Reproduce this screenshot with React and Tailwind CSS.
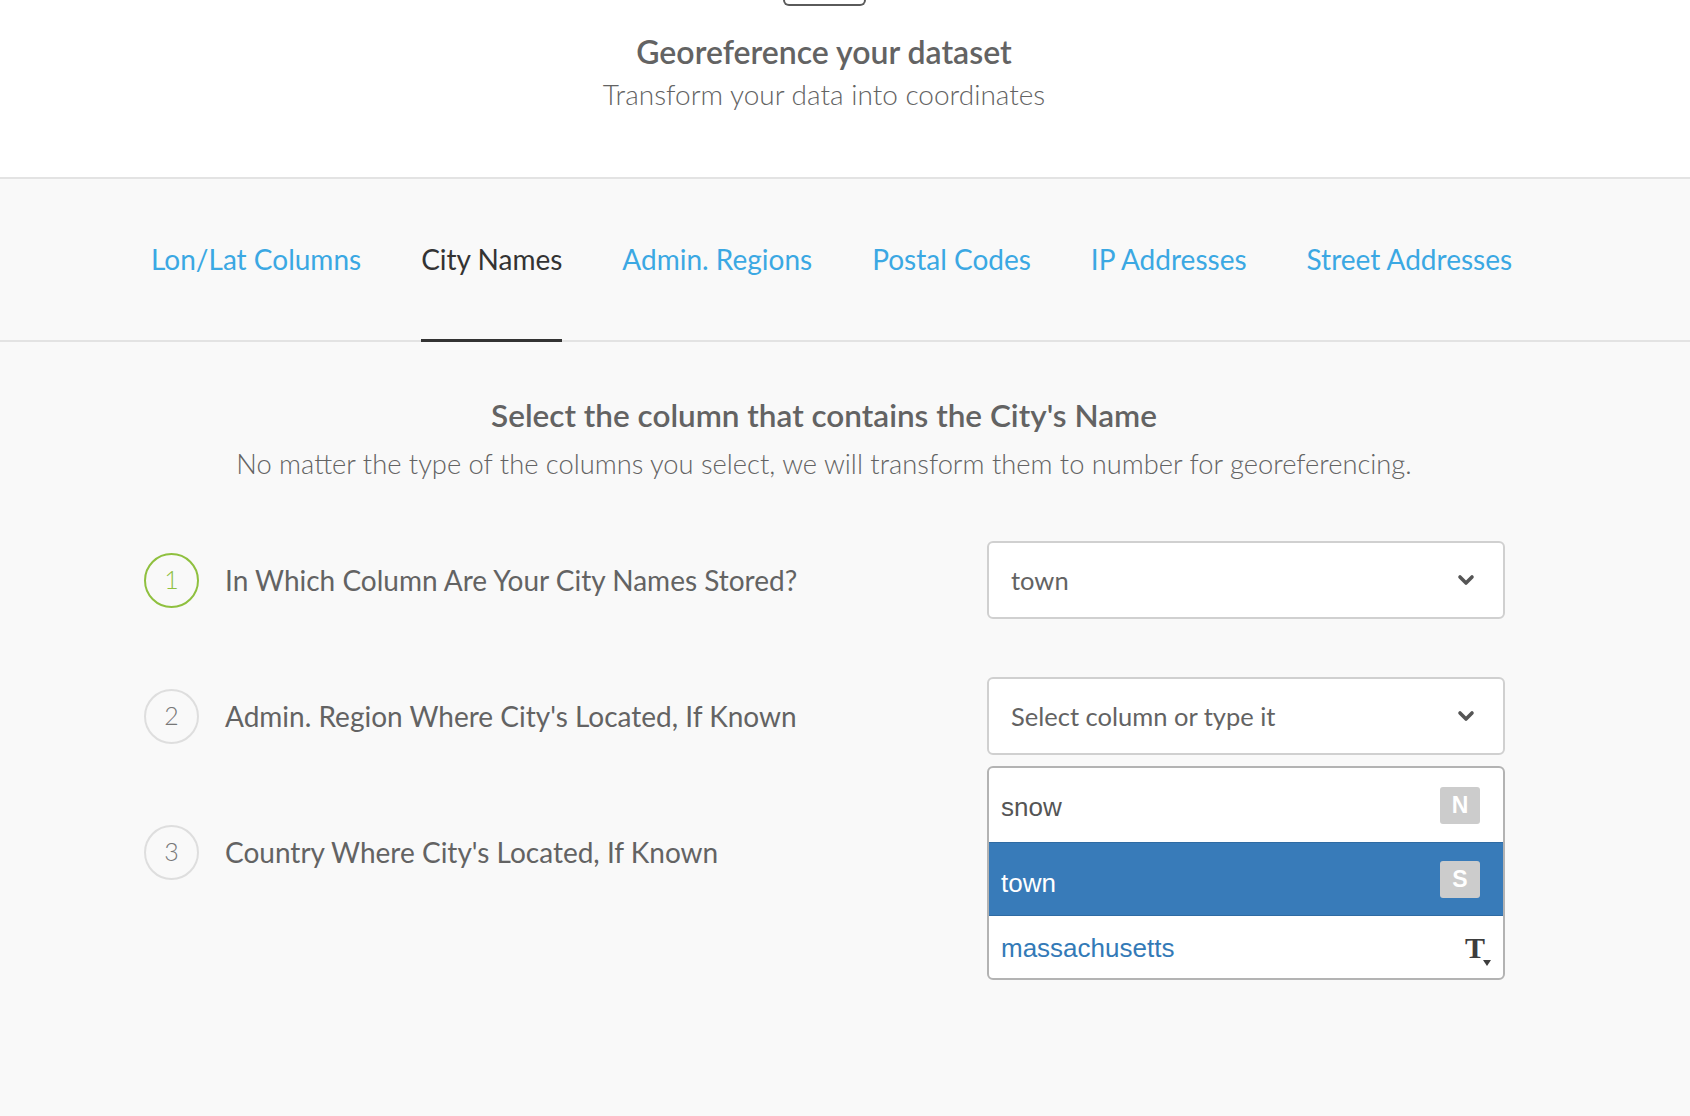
const tabs = [
  { label: "Lon/Lat Columns" },
  { label: "City Names", active: true },
  { label: "Admin. Regions" },
  { label: "Postal Codes" },
  { label: "IP Addresses" },
  { label: "Street Addresses" },
];

const Chevron = () => (
  <svg width="18" height="12" viewBox="0 0 18 12" className="shrink-0">
    <polyline points="3,3 9,9 15,3" fill="none" stroke="#555" strokeWidth="3.6" strokeLinecap="round" strokeLinejoin="round" />
  </svg>
);

const StepCircle = ({ n, active }) => (
  <div
    className={`flex h-[55px] w-[55px] shrink-0 items-center justify-center rounded-full border-2 text-[25px] font-light ${
      active ? "border-[#8fc03f] text-[#8fc03f]" : "border-[#dedede] text-[#777]"
    }`}
  >
    {n}
  </div>
);

const SelectBox = ({ value, children }) => (
  <div className="relative w-[518px]">
    <div className="flex h-[78px] items-center justify-between rounded-[6px] border-2 border-[#d0d0d0] bg-white pl-[22px] pr-[28px]">
      <span className="pt-[1px] text-[25.5px] text-[#636363]">{value}</span>
      <Chevron />
    </div>
    {children}
  </div>
);

const Badge = ({ letter }) => (
  <span className="flex h-[37px] w-[40px] items-center justify-center rounded-[3px] bg-[#cccccc] text-[23px] font-bold text-white">
    {letter}
  </span>
);

const DropdownList = () => (
  <div
    className="absolute left-0 top-[89px] z-10 h-[214px] w-[518px] overflow-hidden rounded-[6px] border-2 border-[#b3b3b3] bg-white"
    style={{ fontFamily: "'Liberation Sans', Arial, sans-serif" }}
  >
    <div className="flex h-[74px] items-center justify-between pl-[12px] pr-[23px]">
      <span className="pt-[4px] text-[26px] text-[#555]">snow</span>
      <Badge letter="N" />
    </div>
    <div className="flex h-[74px] items-center justify-between border-y border-[#2f6ba3] bg-[#387bb9] pl-[12px] pr-[23px]">
      <span className="pt-[8px] text-[26px] text-white">town</span>
      <Badge letter="S" />
    </div>
    <div className="flex h-[64px] items-center justify-between pl-[12px] pr-[12px]">
      <span className="pt-[1px] text-[26px] text-[#337ab7]">massachusetts</span>
      <span className="relative flex items-end pr-[6px]">
        <span className="text-[30px] font-bold leading-none text-[#3d3d3d]" style={{ fontFamily: "'Liberation Serif', serif" }}>
          T
        </span>
        <svg width="8" height="6" viewBox="0 0 8 6" className="absolute bottom-[-3px] right-0">
          <polygon points="0,0 8,0 4,6" fill="#3d3d3d" />
        </svg>
      </span>
    </div>
  </div>
);

const steps = [
  { n: 1, label: "In Which Column Are Your City Names Stored?", active: true, value: "town" },
  { n: 2, label: "Admin. Region Where City's Located, If Known", value: "Select column or type it", open: true },
  { n: 3, label: "Country Where City's Located, If Known" },
];

export default function App() {
  return (
    <div className="min-h-screen bg-[#f9f9f9]" style={{ fontFamily: "Lato, 'Open Sans', sans-serif" }}>
      <header className="h-[179px] border-b-2 border-[#e3e3e3] bg-white pr-[42px]">
        <div className="mx-auto h-[6px] w-[83px] rounded-b-[6px] border-2 border-t-0 border-[#5a5a5a]" />
        <h1 className="mt-[27px] text-center text-[32px] font-semibold leading-[38px] text-[#636363]">
          Georeference your dataset
        </h1>
        <p className="mt-[6px] text-center text-[28px] font-light leading-[34px] text-[#636363]">
          Transform your data into coordinates
        </p>
      </header>

      <nav className="flex h-[163px] items-end gap-[60px] border-b-2 border-[#e3e3e3] pl-[151px]">
        {tabs.map((t) => (
          <a
            key={t.label}
            href="#"
            className={`-mb-[2px] border-b-[3px] pb-[63px] text-[28px] leading-[34px] ${
              t.active ? "border-[#333] text-[#333]" : "border-transparent text-[#3ba8e3]"
            }`}
          >
            {t.label}
          </a>
        ))}
      </nav>

      <main className="pb-[120px]">
        <div className="pr-[42px] pt-[54px] text-center">
          <h2 className="text-[31.5px] font-semibold leading-[38px] text-[#636363]">
            Select the column that contains the City's Name
          </h2>
          <p className="mt-[13px] text-[27.3px] font-light leading-[34px] text-[#636363]">
            No matter the type of the columns you select, we will transform them to number for georeferencing.
          </p>
        </div>

        <div className="mt-[60px] flex flex-col gap-[58px] pl-[144px] pr-[185px]">
          {steps.map((s) => (
            <div key={s.n} className="flex h-[78px] items-center justify-between">
              <div className="flex items-center gap-[26px]">
                <StepCircle n={s.n} active={s.active} />
                <span className="text-[28px] text-[#636363]">{s.label}</span>
              </div>
              {s.value && <SelectBox value={s.value}>{s.open && <DropdownList />}</SelectBox>}
            </div>
          ))}
        </div>
      </main>
    </div>
  );
}
